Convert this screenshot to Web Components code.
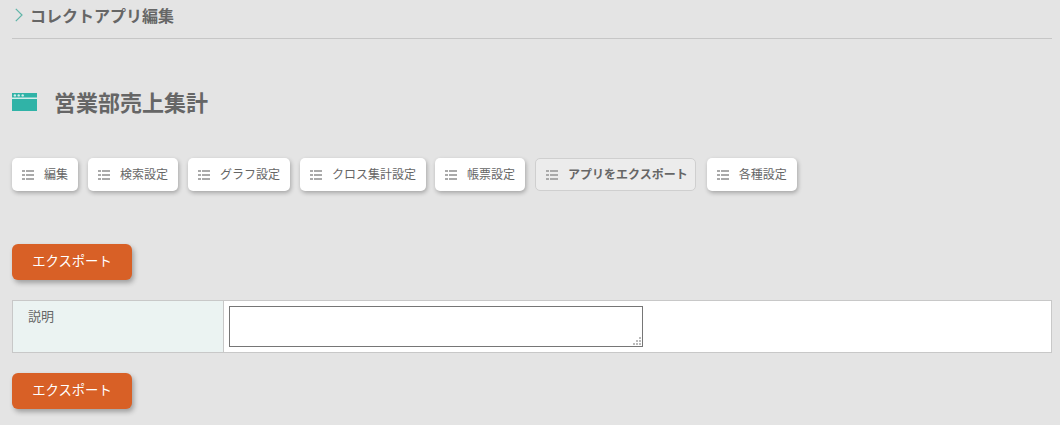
<!DOCTYPE html>
<html lang="ja"><head><meta charset="utf-8">
<style>
html,body{margin:0;background:#e4e4e4;}
body{font-family:"Noto Sans CJK JP","Noto Sans",sans-serif;color:#666;padding:0 8px 0 12px;height:425px;box-sizing:border-box;overflow:hidden;}
</style></head><body>
<page-heading>コレクトアプリ編集</page-heading>
<app-title>営業部売上集計</app-title>
<nav-bar>
  <nav-btn>編集</nav-btn>
  <nav-btn>検索設定</nav-btn>
  <nav-btn>グラフ設定</nav-btn>
  <nav-btn style="margin-right:-1px">クロス集計設定</nav-btn>
  <nav-btn>帳票設定</nav-btn>
  <nav-btn active>アプリをエクスポート</nav-btn>
  <nav-btn>各種設定</nav-btn>
</nav-bar>
<export-btn style="margin-top:53px">エクスポート</export-btn>
<form-table label="説明"></form-table>
<export-btn style="margin-top:20px">エクスポート</export-btn>
<script>
function def(name,html,init){
  customElements.define(name,class extends HTMLElement{
    constructor(){super();const r=this.attachShadow({mode:"open"});r.innerHTML=html;if(init)init(this,r);}
  });
}
def("page-heading",`<style>
:host{display:block;height:38px;border-bottom:1px solid #c6c6c6;font-size:16px;font-weight:700;color:#666;}
.w{display:flex;align-items:center;height:30px;}
svg{display:block;margin:0 7px 0 3px;}
</style><div class="w"><svg width="8" height="14" viewBox="0 0 8 14"><path d="M.8.8 7 7 .8 13.200" fill="none" stroke="#5fb5a8" stroke-width="1.200"/></svg><span><slot></slot></span></div>`);
def("app-title",`<style>
:host{display:flex;align-items:center;height:32px;margin-top:47px;font-size:22px;font-weight:700;color:#666;}
svg{display:block;margin-right:18px;}
span{display:block;margin:-3px 0 0 -1px;}
</style><svg width="25" height="18" viewBox="0 0 25 18"><path fill="#30b3a7" d="M0 0h25v18H0z"/><path fill="#d4edea" d="M0 4.500h25V6H0z"/><g fill="#d4edea"><circle cx="2.900" cy="2.400" r="1.200"/><circle cx="6.700" cy="2.400" r="1.200"/><circle cx="10.700" cy="2.400" r="1.200"/></g></svg><span><slot></slot></span>`);
def("nav-bar",`<style>
:host{display:flex;gap:10px;margin-top:40px;}
</style><slot></slot>`);
def("nav-btn",`<style>
:host{display:flex;align-items:center;height:33px;box-sizing:border-box;padding:0 10px;background:#fff;border-radius:5px;box-shadow:1px 2px 4px rgba(0,0,0,.28);font-size:12px;color:#666;white-space:nowrap;}
:host([active]){background:#ececec;border:1px solid #cfcfcf;box-shadow:none;font-weight:700;padding:0 7px 0 10px;margin-right:1px;}
svg{display:block;margin-right:10px;flex:none;margin-top:1px;}
span{display:block;margin-top:-2px;}
</style><svg width="12" height="10" viewBox="0 0 12 10" fill="#aaa"><path d="M0 0h3v2H0zM4 0h8v2H4zM0 4h3v2H0zM4 4h8v2H4zM0 8h3v2H0zM4 8h8v2H4z"/></svg><span><slot></slot></span>`);
def("export-btn",`<style>
:host{display:flex;align-items:center;justify-content:center;width:120px;height:36px;background:#d86026;border-radius:6px;box-shadow:2px 3px 5px rgba(0,0,0,.3);color:#fff;font-size:13.333px;}
span{display:block;margin-top:-3px;}
</style><span><slot></slot></span>`);
def("form-table",`<style>
:host{display:flex;margin-top:20px;width:1040px;height:53px;box-sizing:border-box;border:1px solid #c8c8c8;background:#fff;}
.th{width:211px;box-sizing:border-box;background:#ebf3f2;border-right:1px solid #c8c8c8;padding:6px 15px;font-size:13px;line-height:18px;color:#666;}
.td{padding:5px;flex:1;}
.ta{position:relative;width:414px;height:41px;}
textarea{display:block;width:100%;height:100%;box-sizing:border-box;margin:0;padding:2px;border:1px solid #767676;border-radius:0;background:#fff;outline:none;resize:none;}
svg{position:absolute;right:2px;bottom:2px;}
</style><div class="th"></div><div class="td"><div class="ta"><textarea></textarea><svg width="8" height="8" viewBox="0 0 8 8" fill="#bbb"><path d="M6 0h2v2H6zM3 3h2v2H3zM6 3h2v2H6zM0 6h2v2H0zM3 6h2v2H3zM6 6h2v2H6z"/></svg></div></div>`,(el,r)=>{r.querySelector(".th").textContent=el.getAttribute("label")||"";});
</script>
</body></html>
